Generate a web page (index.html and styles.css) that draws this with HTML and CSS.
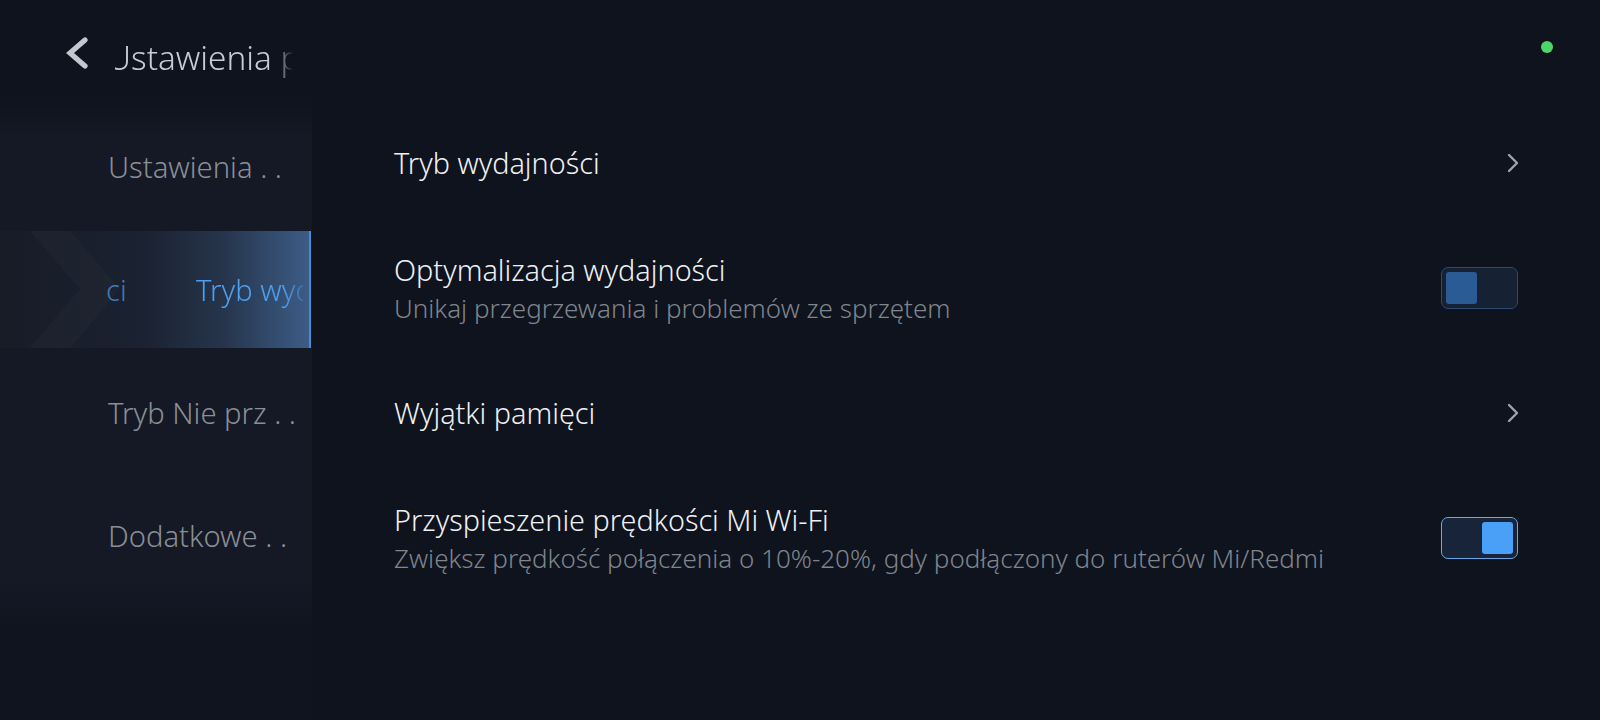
FILE: index.html
```html
<!DOCTYPE html>
<html lang="pl">
<head>
<meta charset="utf-8">
<title>Ustawienia</title>
<link rel="stylesheet" href="styles.css">
</head>
<body>
<div class="screen">
  <header class="topbar">
    <button class="back" aria-label="Wstecz">
      <svg width="30" height="34" viewBox="0 0 30 34"><polyline points="23,4 8,17 23,30" fill="none" stroke="#c3c7cf" stroke-width="5.2" stroke-linecap="round" stroke-linejoin="miter"/></svg>
    </button>
    <div class="title-clip"><span class="title">Ustawienia procesora</span></div>
  </header>
  <span class="status-dot"></span>
  <div class="body">
    <nav class="sidebar">
      <div class="side-item">Ustawienia . .</div>
      <div class="side-item side-active">
        <div class="active-band">
          <svg class="ghost" width="120" height="117" viewBox="0 0 120 117"><polygon points="22,0 62,0 112,58 62,117 22,117 72,58" fill="#2a2e39" opacity="0.3"/></svg>
          <span class="prev">ci</span>
          <span class="cur-clip"><span class="cur">Tryb wydajności</span></span>
        </div>
      </div>
      <div class="side-item">Tryb Nie prz . .</div>
      <div class="side-item">Dodatkowe . .</div>
    </nav>
    <main class="content">
      <div class="row">
        <div class="texts"><div class="label">Tryb wydajności</div></div>
        <svg class="chev" width="14" height="22" viewBox="0 0 14 22"><polyline points="3,3 11,11 3,19" fill="none" stroke="#9ea3ac" stroke-width="2.4" stroke-linecap="round" stroke-linejoin="round"/></svg>
      </div>
      <div class="row">
        <div class="texts">
          <div class="label">Optymalizacja wydajności</div>
          <div class="sub">Unikaj przegrzewania i problemów ze sprzętem</div>
        </div>
        <div class="toggle off"><span class="knob"></span></div>
      </div>
      <div class="row">
        <div class="texts"><div class="label">Wyjątki pamięci</div></div>
        <svg class="chev" width="14" height="22" viewBox="0 0 14 22"><polyline points="3,3 11,11 3,19" fill="none" stroke="#9ea3ac" stroke-width="2.4" stroke-linecap="round" stroke-linejoin="round"/></svg>
      </div>
      <div class="row">
        <div class="texts">
          <div class="label">Przyspieszenie prędkości Mi Wi-Fi</div>
          <div class="sub">Zwiększ prędkość połączenia o 10%-20%, gdy podłączony do ruterów Mi/Redmi</div>
        </div>
        <div class="toggle on"><span class="knob"></span></div>
      </div>
    </main>
  </div>
</div>
</body>
</html>
```
FILE: styles.css
```css
* { box-sizing: border-box; }
html, body { margin: 0; padding: 0; }
body {
  background: #0e131d;
  font-family: "Noto Sans", "Open Sans", sans-serif;
  font-weight: 350;
  width: 1600px;
  height: 720px;
  overflow: hidden;
}
.screen {
  position: relative;
  width: 1600px;
  height: 720px;
  background: #0e131d;
}
.topbar {
  height: 100px;
  display: flex;
  align-items: flex-start;
  padding-top: 36px;
  padding-left: 61px;
}
.back {
  background: none;
  border: 0;
  padding: 0;
  width: 32px;
  height: 34px;
  display: flex;
  align-items: center;
  justify-content: center;
}
.title-clip {
  margin-left: 22px;
  width: 180px;
  height: 44px;
  overflow: hidden;
  -webkit-mask-image: linear-gradient(90deg, #000 0, #000 160px, transparent 178px);
  mask-image: linear-gradient(90deg, #000 0, #000 160px, transparent 178px);
}
.title {
  display: block;
  margin-left: -8px;
  white-space: nowrap;
  font-size: 33.3px;
  line-height: 42px;
  color: #c6cbd5;
}
.status-dot {
  position: absolute;
  top: 41px;
  left: 1541px;
  width: 12px;
  height: 12px;
  border-radius: 50%;
  background: #4fd668;
}
.body {
  display: flex;
  height: 620px;
}
.sidebar {
  width: 312px;
  flex: none;
  padding-top: 5px;
  background: linear-gradient(180deg, #0e131d 0, #141925 40px, #141925 480px, #0f141f 530px);
}
.side-item {
  height: 123px;
  display: flex;
  align-items: center;
  padding-left: 108px;
  font-size: 29.2px;
  color: #8a8e97;
  white-space: nowrap;
}
.side-active {
  padding-left: 0;
}
.active-band {
  position: relative;
  width: 311px;
  height: 117px;
  display: flex;
  align-items: center;
  overflow: hidden;
  background: linear-gradient(90deg, #171c27 0, #1a2130 140px, #26354c 225px, #3a5880 300px, #3c5b85 311px);
  border-right: 2px solid #4b8bd4;
}
.ghost {
  position: absolute;
  left: 8px;
  top: 0;
}
.prev {
  position: relative;
  width: 90px;
  margin-left: 106px;
  flex: none;
  color: #3f79b8;
}
.cur-clip {
  position: relative;
  flex: none;
  width: 107px;
  overflow: hidden;
  white-space: nowrap;
  -webkit-mask-image: linear-gradient(90deg, #000 0, #000 88px, rgba(0,0,0,0.35) 107px);
  mask-image: linear-gradient(90deg, #000 0, #000 88px, rgba(0,0,0,0.35) 107px);
}
.cur {
  color: #4c9ff0;
}
.content {
  flex: 1;
  padding: 0 82px;
}
.row {
  height: 125px;
  display: flex;
  align-items: center;
  justify-content: space-between;
}
.texts {
  display: flex;
  flex-direction: column;
}
.label {
  font-size: 28.8px;
  line-height: 36px;
  color: #eef0f4;
  white-space: nowrap;
}
.sub {
  margin-top: 4px;
  font-size: 26px;
  line-height: 32px;
  color: #7f848d;
  white-space: nowrap;
}
.chev {
  margin-right: -2px;
}
.toggle {
  width: 77px;
  height: 42px;
  border-radius: 7px;
  padding: 4px;
  display: flex;
}
.toggle .knob {
  width: 31px;
  height: 32px;
  border-radius: 3px;
}
.toggle.off {
  border: 1.5px solid #2a4a71;
  background: #162133;
  justify-content: flex-start;
}
.toggle.off .knob {
  background: #2b5b94;
}
.toggle.on {
  border: 1.5px solid #6da6e4;
  background: #172439;
  justify-content: flex-end;
}
.toggle.on .knob {
  background: #4aa0f6;
}
```
